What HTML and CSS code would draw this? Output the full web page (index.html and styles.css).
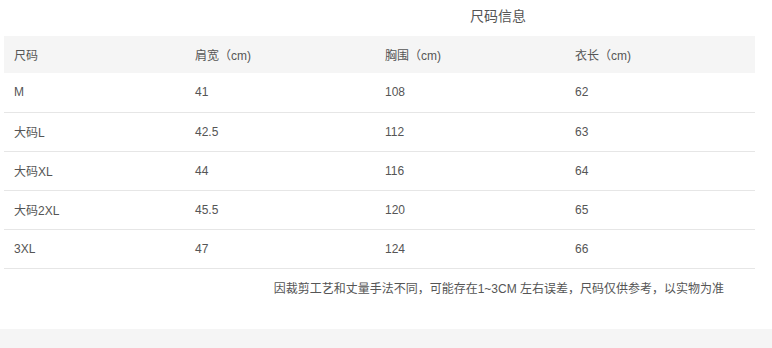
FILE: index.html
```html
<!DOCTYPE html>
<html lang="zh">
<head>
<meta charset="utf-8">
<link rel="stylesheet" href="styles.css">
</head>
<body>
<div class="page">
  <div class="title">尺码信息</div>
  <table class="size-table">
    <thead>
      <tr><th class="c1">尺码</th><th>肩宽（cm)</th><th>胸围（cm)</th><th>衣长（cm)</th></tr>
    </thead>
    <tbody>
      <tr><td>M</td><td>41</td><td>108</td><td>62</td></tr>
      <tr><td>大码L</td><td>42.5</td><td>112</td><td>63</td></tr>
      <tr><td>大码XL</td><td>44</td><td>116</td><td>64</td></tr>
      <tr><td>大码2XL</td><td>45.5</td><td>120</td><td>65</td></tr>
      <tr><td>3XL</td><td>47</td><td>124</td><td>66</td></tr>
    </tbody>
  </table>
  <div class="note">因裁剪工艺和丈量手法不同，可能存在1~3CM 左右误差，尺码仅供参考，以实物为准</div>
</div>
<div class="footer-band"></div>
</body>
</html>
```
FILE: styles.css
```css
html, body {
  margin: 0;
  padding: 0;
  background: #fff;
}
body {
  font-family: "Liberation Sans", Arial, "Noto Sans CJK SC", sans-serif;
  color: #555;
  width: 772px;
  height: 348px;
  overflow: hidden;
  display: flex;
  flex-direction: column;
}
.page {
  padding-left: 4px;
  flex: 1;
}
.title {
  height: 36px;
  line-height: 32px;
  font-size: 14px;
  color: #555;
  padding-left: 466px;
}
.size-table {
  width: 750px;
  border-collapse: collapse;
  table-layout: fixed;
  font-size: 12px;
  color: #555;
}
.size-table th,
.size-table td {
  text-align: left;
  font-weight: normal;
  padding: 0 0 0 10px;
  width: 180px;
}
.size-table th.c1 { width: 171px; }
.size-table thead tr {
  background: #f5f5f5;
  height: 37px;
}
.size-table tbody tr {
  height: 39px;
  border-bottom: 1px solid #e6e6e6;
}
.note {
  width: 720px;
  text-align: right;
  font-size: 12px;
  color: #555;
  line-height: 40px;
}
.footer-band {
  height: 19px;
  background: #f5f5f5;
}
```
